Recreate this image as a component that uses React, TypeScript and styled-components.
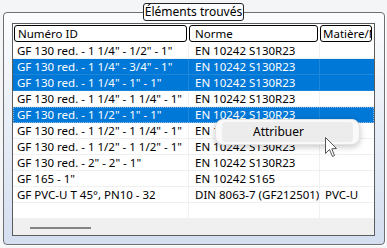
import React from "react";
import styled, { createGlobalStyle } from "styled-components";

const GlobalStyle = createGlobalStyle`
  html, body {
    margin: 0;
    padding: 0;
  }
  body {
    width: 387px;
    height: 248px;
    overflow: hidden;
    background: #f4f5f7;
    font-family: "Noto Sans", "Open Sans", sans-serif;
    font-size: 11.5px;
    color: #000;
  }
`;

const Page = styled.div`
  position: relative;
  width: 387px;
  height: 248px;
  padding: 3px 0 0 3px;
  box-sizing: border-box;
`;

const GroupBox = styled.fieldset`
  margin: 0;
  min-width: 0;
  width: 382px;
  height: 242px;
  box-sizing: border-box;
  padding: 2px 9px 8px 8px;
  border: 1px solid #6f6f6f;
  border-radius: 4px;
  background: linear-gradient(#fcfdfe, #d3deef);
  box-shadow: 1px 1px 0 #ffffff;
`;

const Legend = styled.legend`
  margin: 0 auto;
  height: 18px;
  box-sizing: border-box;
  padding: 0 1px;
  line-height: 15px;
  font-size: 12px;
  border: 1px solid #222;
  border-radius: 3px;
  background: #fbfcfd;
`;

const ListView = styled.div`
  width: 363px;
  height: 213px;
  box-sizing: border-box;
  border: 1px solid #5c5c5c;
  background: #fff;
  display: flex;
  flex-direction: column;
  overflow: hidden;
`;

const HeaderRow = styled.div`
  display: grid;
  grid-template-columns: 176px 131px 1fr;
  height: 19px;
  flex: none;
`;

const HeaderCell = styled.div<{ $first?: boolean; $pad: number }>`
  margin: 1px 2px 1px ${(p) => (p.$first ? 1 : 0)}px;
  height: 17px;
  box-sizing: border-box;
  border: 1px solid #000;
  border-radius: 3px;
  padding-left: ${(p) => p.$pad}px;
  line-height: 15px;
  white-space: nowrap;
  overflow: hidden;
`;

const Row = styled.div<{ $selected?: boolean; $focused?: boolean }>`
  display: grid;
  grid-template-columns: 176px 131px 1fr;
  height: 16px;
  flex: none;
  box-sizing: border-box;
  border-bottom: 1px solid ${(p) => (p.$selected ? "#1f87d9" : "#f0f0f0")};
  background: ${(p) => (p.$selected ? "#0078d7" : "#fff")};
  color: ${(p) => (p.$selected ? "#fff" : "#000")};
  outline: ${(p) => (p.$focused ? "1px dotted #7fb6ea" : "none")};
  outline-offset: -1px;
`;

const Cell = styled.div<{ $pad: number; $last?: boolean; $selected?: boolean }>`
  padding-left: ${(p) => p.$pad}px;
  line-height: 15px;
  white-space: nowrap;
  overflow: hidden;
  border-right: ${(p) =>
    p.$last ? "none" : `1px solid ${p.$selected ? "#1f87d9" : "#f0f0f0"}`};
`;

const HScroll = styled.div`
  flex: 1;
  background: #f0f0f0;
  padding: 8px 0 0 17px;
`;

const Thumb = styled.div`
  width: 61px;
  height: 2px;
  background: #858585;
`;

const ContextMenu = styled.div`
  position: absolute;
  left: 215px;
  top: 119px;
  width: 145px;
  height: 26px;
  box-sizing: border-box;
  padding: 2px 6px;
  background: #f9f9f9;
  border: 1px solid #e2e2e2;
  border-radius: 8px;
  box-shadow: 0 2px 6px rgba(0, 0, 0, 0.22);
`;

const MenuItem = styled.div`
  height: 20px;
  border-radius: 4px;
  background: #ececec;
  padding-left: 31px;
  line-height: 20px;
  font-size: 12px;
`;

const Cursor = styled.svg`
  position: absolute;
  left: 325px;
  top: 137px;
`;

type Item = { id: string; norme: string; matiere?: string; selected?: boolean; focused?: boolean };

const items: Item[] = [
  { id: 'GF 130 red. - 1 1/4" - 1/2" - 1"', norme: "EN 10242 S130R23" },
  { id: 'GF 130 red. - 1 1/4" - 3/4" - 1"', norme: "EN 10242 S130R23", selected: true },
  { id: 'GF 130 red. - 1 1/4" - 1" - 1"', norme: "EN 10242 S130R23", selected: true },
  { id: 'GF 130 red. - 1 1/4" - 1 1/4" - 1"', norme: "EN 10242 S130R23" },
  { id: 'GF 130 red. - 1 1/2" - 1" - 1"', norme: "EN 10242 S130R23", selected: true, focused: true },
  { id: 'GF 130 red. - 1 1/2" - 1 1/4" - 1"', norme: "EN 10242 S130R23" },
  { id: 'GF 130 red. - 1 1/2" - 1 1/2" - 1"', norme: "EN 10242 S130R23" },
  { id: 'GF 130 red. - 2" - 2" - 1"', norme: "EN 10242 S130R23" },
  { id: 'GF 165 - 1"', norme: "EN 10242 S165" },
  { id: "GF PVC-U T 45°, PN10 - 32", norme: "DIN 8063-7 (GF212501)", matiere: "PVC-U" },
  { id: "", norme: "" },
];

export default function App() {
  return (
    <Page>
      <GlobalStyle />
      <GroupBox>
        <Legend>Éléments trouvés</Legend>
        <ListView>
          <HeaderRow>
            <HeaderCell $first $pad={3}>Numéro ID</HeaderCell>
            <HeaderCell $pad={5}>Norme</HeaderCell>
            <HeaderCell $pad={2}>Matière/Matériau</HeaderCell>
          </HeaderRow>
          {items.map((it, i) => (
            <Row key={i} $selected={it.selected} $focused={it.focused}>
              <Cell $pad={4} $selected={it.selected}>{it.id}</Cell>
              <Cell $pad={6} $selected={it.selected}>{it.norme}</Cell>
              <Cell $pad={5} $last>{it.matiere}</Cell>
            </Row>
          ))}
          <HScroll>
            <Thumb />
          </HScroll>
        </ListView>
      </GroupBox>
      <ContextMenu>
        <MenuItem>Attribuer</MenuItem>
      </ContextMenu>
      <Cursor width="13" height="21" viewBox="0 0 13 21">
        <path
          d="M0.5 0.5 L0.5 16.5 L4.5 12.5 L7.5 19.5 L9.5 18.5 L6.8 11.8 L11.5 11.5 Z"
          fill="#fff"
          stroke="#555"
          strokeWidth="1"
          strokeLinejoin="round"
        />
      </Cursor>
    </Page>
  );
}
